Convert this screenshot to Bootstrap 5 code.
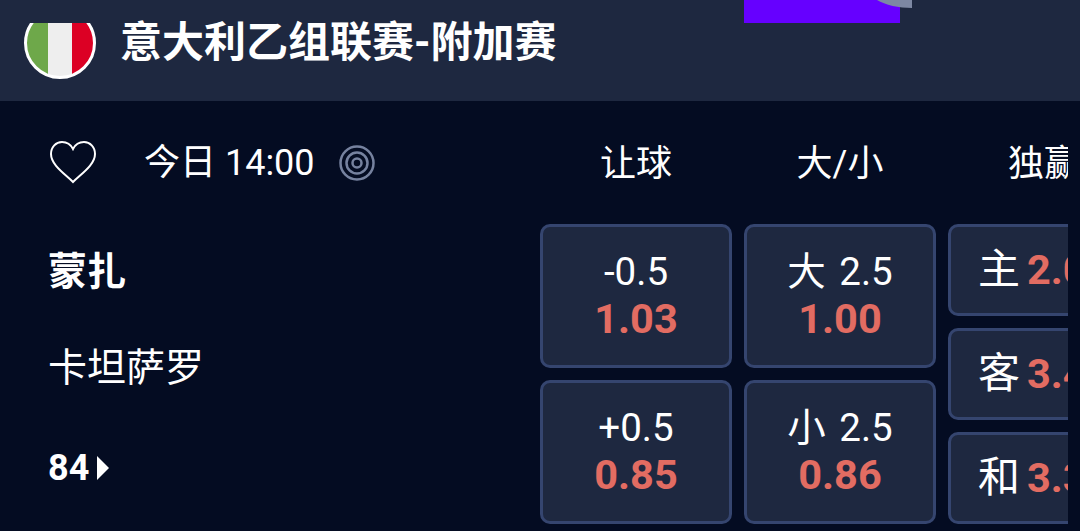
<!DOCTYPE html>
<html lang="zh">
<head>
    <meta charset="UTF-8">
    <meta name="viewport" content="width=device-width, initial-scale=1">
    <link href="https://cdn.jsdelivr.net/npm/bootstrap@5.3.0/dist/css/bootstrap.min.css" rel="stylesheet">
    <title>意大利乙组联赛-附加赛</title>
    <style>
        html, body {
            height: 100%;
            overflow: hidden;
        }
        body {
            background: #040c22;
            color: #fff;
            font-family: Roboto, "Noto Sans CJK SC", sans-serif;
        }
        .league-bar {
            height: 101px;
            background: #1e2840;
            padding: 23px 0 0 24px;
        }
        .league-name {
            margin-left: 24px;
            font-size: 42px;
            line-height: 40px;
            font-weight: 700;
        }
        .promo-art {
            left: 744px;
            top: 0;
        }
        .match-info {
            width: 540px;
            padding-left: 48px;
        }
        .time-row {
            height: 123px;
            padding-left: 2px;
        }
        .time-text {
            margin-left: 48px;
            margin-right: 24px;
            padding-top: 1px;
            font-size: 36px;
            line-height: 40px;
        }
        .team-name {
            font-size: 39px;
            line-height: 48px;
        }
        .home-team {
            margin-top: 24px;
            font-weight: 700;
        }
        .away-team {
            margin-top: 48px;
        }
        .more-count {
            margin-top: 56px;
            font-size: 36px;
            line-height: 40px;
            font-weight: 700;
        }
        .more-arrow {
            margin-left: 8px;
        }
        .odds-area {
            width: 528px;
            overflow: hidden;
            gap: 12px;
        }
        .odds-col {
            width: 192px;
            flex: 0 0 192px;
        }
        .odds-title {
            height: 123px;
            padding-top: 2px;
            font-size: 36px;
            line-height: 40px;
        }
        .odds-stack {
            gap: 12px;
        }
        .odd-box {
            height: 144px;
            padding-bottom: 2px;
            background: #1e2840;
            border: 3px solid #35456f;
            border-radius: 10px;
            font-size: 38.5px;
            line-height: 47px;
            word-spacing: 4px;
        }
        .odd-short {
            height: 92px;
            padding-left: 27px;
            font-size: 42px;
            white-space: nowrap;
        }
        .odd-value {
            color: #e26c62;
            font-size: 41.5px;
            font-weight: 700;
        }
        .odd-short .odd-value {
            margin-left: 7px;
        }
    </style>
</head>
<body>
    <header class="league-bar d-flex position-relative">
        <svg width="72" height="56" viewBox="0 16 72 56">
            <clipPath id="flagClip"><circle cx="36" cy="36" r="34"></circle></clipPath>
            <g clip-path="url(#flagClip)">
                <rect x="0" y="0" width="24" height="72" fill="#6ea84a"></rect>
                <rect x="24" y="0" width="24" height="72" fill="#eeeeee"></rect>
                <rect x="48" y="0" width="24" height="72" fill="#dc0024"></rect>
            </g>
            <circle cx="36" cy="36" r="34.5" fill="none" stroke="#fff" stroke-width="3"></circle>
        </svg>
        <div class="league-name">意大利乙组联赛-附加赛</div>
        <svg class="promo-art position-absolute" width="168" height="23" viewBox="0 0 168 23">
            <rect x="0" y="0" width="156" height="23" fill="#6600ff"></rect>
            <path d="M133 0 C141 5 155 8 168 8 L168 0 Z" fill="#7d88a3"></path>
        </svg>
    </header>

    <main class="d-flex">
        <section class="match-info">
            <div class="time-row d-flex align-items-center">
                <svg width="46" height="44" viewBox="0 0 46 44">
                    <path d="M23 41 C15 33 1 24 1 13 C1 6 6 1 12 1 C17 1 21 4 23 8 C25 4 29 1 34 1 C40 1 45 6 45 13 C45 24 31 33 23 41 Z" fill="none" stroke="#fff" stroke-width="2"></path>
                </svg>
                <span class="time-text">今日 14:00</span>
                <svg width="36" height="36" viewBox="0 0 36 36" fill="none" stroke="#76829f">
                    <circle cx="18" cy="18" r="16.5" stroke-width="2.5"></circle>
                    <circle cx="18" cy="18" r="10.5" stroke-width="2.5"></circle>
                    <circle cx="18" cy="18" r="4.5" stroke-width="2.5"></circle>
                </svg>
            </div>
            <div class="team-name home-team">蒙扎</div>
            <div class="team-name away-team">卡坦萨罗</div>
            <div class="more-count d-flex align-items-center">
                84
                <svg class="more-arrow" width="12" height="24" viewBox="0 0 12 24">
                    <path d="M0 0 L12 12 L0 24 Z" fill="#fff"></path>
                </svg>
            </div>
        </section>

        <section class="odds-area d-flex">
            <div class="odds-col">
                <div class="odds-title d-flex align-items-center justify-content-center">让球</div>
                <div class="odds-stack d-flex flex-column">
                    <div class="odd-box d-flex flex-column align-items-center justify-content-center">
                        <span>-0.5</span><span class="odd-value">1.03</span>
                    </div>
                    <div class="odd-box d-flex flex-column align-items-center justify-content-center">
                        <span>+0.5</span><span class="odd-value">0.85</span>
                    </div>
                </div>
            </div>
            <div class="odds-col">
                <div class="odds-title d-flex align-items-center justify-content-center">大/小</div>
                <div class="odds-stack d-flex flex-column">
                    <div class="odd-box d-flex flex-column align-items-center justify-content-center">
                        <span>大 2.5</span><span class="odd-value">1.00</span>
                    </div>
                    <div class="odd-box d-flex flex-column align-items-center justify-content-center">
                        <span>小 2.5</span><span class="odd-value">0.86</span>
                    </div>
                </div>
            </div>
            <div class="odds-col">
                <div class="odds-title d-flex align-items-center justify-content-center">独赢</div>
                <div class="odds-stack d-flex flex-column">
                    <div class="odd-box odd-short d-flex align-items-center">
                        <span>主</span><span class="odd-value">2.04</span>
                    </div>
                    <div class="odd-box odd-short d-flex align-items-center">
                        <span>客</span><span class="odd-value">3.40</span>
                    </div>
                    <div class="odd-box odd-short d-flex align-items-center">
                        <span>和</span><span class="odd-value">3.30</span>
                    </div>
                </div>
            </div>
        </section>
    </main>
    <script src="https://cdn.jsdelivr.net/npm/bootstrap@5.3.0/dist/js/bootstrap.bundle.min.js"></script>
</body>
</html>
